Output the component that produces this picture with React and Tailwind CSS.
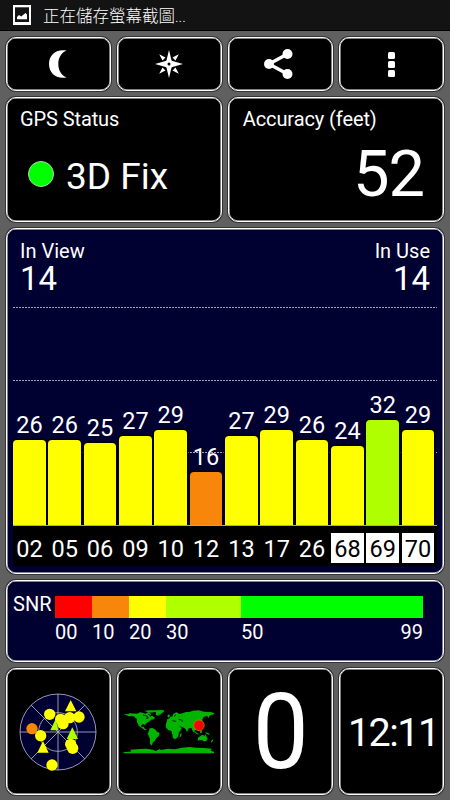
import React from "react";

const satellites = [
  { prn: "02", snr: 26 },
  { prn: "05", snr: 26 },
  { prn: "06", snr: 25 },
  { prn: "09", snr: 27 },
  { prn: "10", snr: 29 },
  { prn: "12", snr: 16 },
  { prn: "13", snr: 27 },
  { prn: "17", snr: 29 },
  { prn: "26", snr: 26 },
  { prn: "68", snr: 24, glonass: true },
  { prn: "69", snr: 32, glonass: true },
  { prn: "70", snr: 29, glonass: true },
];

// pixels of bar per dB of signal
const BAR_SCALE = 3.285;

const snrColor = (snr) => {
  if (snr < 10) return "bg-[#ff0000]";
  if (snr < 20) return "bg-[#f8860b]";
  if (snr < 30) return "bg-[#ffff00]";
  if (snr < 50) return "bg-[#b0ff00]";
  return "bg-[#00ff00]";
};

const Card = ({ className = "", children }) => (
  <div
    className={`rounded-[10px] border border-white shadow-[0_0_0_1px_#333,inset_0_0_0_0.5px_#fff] ${className}`}
  >
    {children}
  </div>
);

const IconButton = ({ label, children }) => (
  <button type="button" aria-label={label} className="h-[54px]">
    <Card className="flex h-full items-center justify-center bg-black">
      {children}
    </Card>
  </button>
);

const StatusBar = () => (
  <header className="flex h-[31px] items-center border-b border-black bg-[#131313] pl-[13px]">
    <svg width="18" height="20" viewBox="0 0 18 20">
      <path fill="#fff" d="M0 0h18v20H0z" />
      <path fill="#131313" d="M2 2.300h14v14.700H2z" />
      <path fill="#fff" d="M4 14.300v-2.300l2-2 2.200 1.500L12.500 8 14 9.500v4.800z" />
    </svg>
    <span className="mt-[3px] ml-3 text-[16.5px] leading-[28px] font-light">
      正在儲存螢幕截圖<span className="text-[15px]">...</span>
    </span>
  </header>
);

const Toolbar = () => (
  <div className="grid grid-cols-4 gap-[5.5px]">
    <IconButton label="Night mode">
      <svg className="mr-[2px]" width="18" height="28" viewBox="0 0 18 28">
        <path
          fill="#fff"
          d="M17.500 0.500C7 -1.500 0 5 0 14s7 15.500 17.500 13.500C12 25 9.300 20 9.300 14S12 3 17.500 0.500z"
        />
      </svg>
    </IconButton>
    <IconButton label="Compass">
      <svg className="mr-px" width="28" height="28" viewBox="-14 -14 28 28">
        <path
          fill="#fff"
          d="M0-14 2.600-3.200 14 0 2.600 3.200 0 14-2.600 3.200-14 0-2.600-3.200z"
        />
        <path
          fill="#fff"
          d="M-9.800-9.800-3.500-6.500-6.500-3.500zM9.800-9.800 6.500-3.500 3.500-6.500zM9.800 9.800 3.500 6.500 6.500 3.500zM-9.800 9.800-6.500 3.500-3.500 6.500z"
        />
        <circle r="4.300" fill="#fff" />
        <circle r="1.500" fill="#000" />
      </svg>
    </IconButton>
    <IconButton label="Share">
      <svg className="mr-[4px]" width="30" height="30" viewBox="0 0 30 30">
        <path
          d="M24.500 5 6 15l18.500 10"
          fill="none"
          stroke="#fff"
          strokeWidth="3.400"
        />
        <g fill="#fff">
          <circle cx="6" cy="15" r="5" />
          <circle cx="24.500" cy="5" r="5" />
          <circle cx="24.500" cy="25" r="5" />
        </g>
      </svg>
    </IconButton>
    <IconButton label="Menu">
      <div className="mt-px flex flex-col gap-[2.5px]">
        <span className="h-[6.5px] w-[7px] rounded-[1.5px] bg-white" />
        <span className="h-[6.5px] w-[7px] rounded-[1.5px] bg-white" />
        <span className="h-[6.5px] w-[7px] rounded-[1.5px] bg-white" />
      </div>
    </IconButton>
  </div>
);

const GridLine = ({ className }) => (
  <div
    className={`absolute inset-x-0 h-px bg-[repeating-linear-gradient(90deg,#a4a4bc_0_2px,transparent_2px_3px)] ${className}`}
  />
);

const SignalChart = () => (
  <Card className="h-[346px] bg-[#000031] pr-[6px] pl-[6px]">
    <div className="flex justify-between px-[7px] pt-[10px]">
      <div>
        <div className="text-[20px] leading-6">In View</div>
        <div className="text-[33px] leading-8">14</div>
      </div>
      <div className="text-right">
        <div className="text-[20px] leading-6">In Use</div>
        <div className="text-[33px] leading-8">14</div>
      </div>
    </div>
    <div className="relative h-[230px]">
      <GridLine className="top-[12px]" />
      <GridLine className="top-[85px]" />
      <GridLine className="top-[157px]" />
      <div className="relative grid h-full grid-cols-12 items-end">
        {satellites.map((sat) => (
          <div key={sat.prn} className="mr-[2.5px] text-center">
            <div className="mb-[3px] text-[23.5px] leading-6">{sat.snr}</div>
            <div
              className={`rounded-t-[4px] shadow-[0_0_0_1.5px_#000008] ${snrColor(sat.snr)}`}
              style={{ height: sat.snr * BAR_SCALE }}
            />
          </div>
        ))}
      </div>
    </div>
    <div className="relative grid h-[41px] grid-cols-12 border-t border-[#a8a890] bg-black pt-[7px]">
      {satellites.map((sat) => (
        <div
          key={sat.prn}
          className={`mr-[2.5px] h-[30px] text-center text-[23.5px] leading-[32px] ${
            sat.glonass ? "bg-white text-black" : "text-white"
          }`}
        >
          {sat.prn}
        </div>
      ))}
    </div>
  </Card>
);

const SnrLegend = () => (
  <Card className="flex h-[82px] bg-[#000031] pt-[15px] pl-[6px] text-[20px] leading-5">
    <div className="-mt-[2px] w-[42px]">SNR</div>
    <div className="w-[368px]">
      <div className="grid h-[22px] grid-cols-[37fr_37fr_37fr_75fr_182fr]">
        <div className="bg-[#ff0000]" />
        <div className="bg-[#f8860b]" />
        <div className="bg-[#ffff00]" />
        <div className="bg-[#b0ff00]" />
        <div className="bg-[#00ff00]" />
      </div>
      <div className="mt-[4px] grid grid-cols-[37fr_37fr_37fr_75fr_182fr]">
        <span>00</span>
        <span>10</span>
        <span>20</span>
        <span>30</span>
        <span className="flex justify-between">
          <span>50</span>
          <span>99</span>
        </span>
      </div>
    </div>
  </Card>
);

const SkyView = () => (
  <svg className="mr-px" width="78" height="78" viewBox="58 96 234 234">
    <circle cx="175" cy="213" r="115" fill="#000031" />
    <g fill="none" stroke="#b4b4cc" strokeWidth="2.500">
      <circle cx="175" cy="213" r="114" />
      <circle cx="175" cy="213" r="58" />
      <path d="M175 99v228M61 213h228M94 132l162 162M94 294l162-162" />
    </g>
    <g fill="#ffff00">
      <circle cx="150" cy="160" r="17" />
      <circle cx="123" cy="224" r="17" />
      <circle cx="157" cy="312" r="17" />
      <circle cx="183" cy="175" r="17" />
      <circle cx="190" cy="188" r="17" />
      <circle cx="210" cy="170" r="17" />
      <circle cx="238" cy="168" r="17" />
      <circle cx="213" cy="250" r="17" />
      <circle cx="219" cy="262" r="17" />
      <path d="M213 117l17 34h-34zM130 240l17 35h-34z" />
    </g>
    <path fill="#b0ff00" d="M168 174l8 34h-24zM218 199l17 35h-34z" />
    <circle cx="97" cy="203" r="17" fill="#f8860b" />
  </svg>
);

const WorldMap = () => (
  <svg className="mr-px" width="92" height="46" viewBox="370 148 276 138">
    <g fill="#00b400">
      <path d="M372 163l14 1 2-3 24 1 10-4 16 4 8-5 8 6-4 8 8-3 8 6-4 5-8 1-4 4-5 4-7 4-1 5-6-4-7 4 2 6 7-2 1 5 8 5-6 0-10-6-8-6-6-12-1-10-10-7-14 0z" />
      <path d="M434 154l14-2 16 0 8 3-10 3-12 1z" />
      <path d="M464 152l28-1 1 4-8 7-10 6-7-3 1-6z" />
      <path d="M450 206l8-1 10 5 4 6 8 4-3 9-7 7-5 8-5 4-4 10-5-6 0-13-3-9-4-8 4-9z" />
      <path d="M500 190l10-3 10 1 8 3 7 2 5 9 6 3-3 7-6 7 0 7-5 9-7 4-5-4-2-11-3-10-9-3-7-7-1-7z" />
      <path d="M542 222l4-2-2 11-4 1z" />
      <path d="M501 186l2-8 7-2 2-5 7-1 2-8 10-4 8 5 12-3 8-3 10 0 10-4 18-1 16 4 20 1 12 4-5 4-8 1-6 9-4-7-10 4-4 8 0 7-7 5-5 10-7 8-5 4 0 6-5-6-4-9-8 1-5 11-5-10-9-5-9-2 5 5-7 7-8-9-2-7-7-1-1-5-6 1-3 4-6-5-5 4z" />
      <path d="M503 169l5-6 3 7-5 4z" />
      <path d="M584 213l9 8 7 3-8 0-7-6zM600 214l6-3 1 8-5 1zM615 217l12 4 4 5-10-3z" />
      <path d="M595 234l8-6 6-3 5 4 3-5 7 13-5 8-7 0-5-4-8 1-5 1z" />
      <path d="M634 244l7-5-1 5-6 5zM618 243l3 0-2 3z" />
      <path d="M372 277l22-1-2-6 28-2 20-1 20 3 8 4 12-6 4 3 20-4 22 2 20-5 24-2 20 2 24 1 22 2-3 6 10 3v5H372z" />
    </g>
    <g stroke="#000" strokeWidth="2.500" fill="none">
      <path d="M430 166l12 3 4 6-7 1M445 163l8 5M518 183l11 2M537 179l9 2 3 5M525 170l3-6" />
    </g>
    <circle cx="598" cy="197" r="16" fill="#ff0000" stroke="#d8a000" strokeWidth="1.500" />
  </svg>
);

export default function App() {
  return (
    <div className="flex h-[800px] w-[450px] flex-col overflow-hidden bg-[#606060] font-[Roboto,'Noto_Sans_CJK_TC',sans-serif] text-white">
      <StatusBar />
      <main className="flex flex-col gap-[6px] px-[6px] pt-[6px]">
        <Toolbar />
        <div className="grid h-[125px] grid-cols-2 gap-[5.5px]">
          <Card className="bg-black pt-[9px] pl-[13px]">
            <div className="text-[20px] leading-6 tracking-[-0.1px]">
              GPS Status
            </div>
            <div className="mt-[25px] flex items-start pl-2">
              <span className="mt-[5px] h-[26px] w-[26px] rounded-full border border-[#a0e0a0] bg-[#00ff00]" />
              <span className="ml-[12px] text-[37px] leading-[42px]">
                3D Fix
              </span>
            </div>
          </Card>
          <Card className="bg-black pt-[9px] pr-[19px] pl-[14px]">
            <div className="text-[20px] leading-6 tracking-[-0.1px]">
              Accuracy (feet)
            </div>
            <div className="mt-[15px] text-right text-[65px] leading-[56px] tracking-[-1px]">
              52
            </div>
          </Card>
        </div>
        <SignalChart />
        <SnrLegend />
        <div className="grid h-[127px] grid-cols-4 gap-[5.5px]">
          <Card className="flex items-center justify-center bg-black">
            <SkyView />
          </Card>
          <Card className="flex items-center justify-center bg-black pt-px">
            <WorldMap />
          </Card>
          <Card className="flex items-center justify-center bg-black text-[106px] leading-none">
            <span className="inline-block scale-x-[0.94]">0</span>
          </Card>
          <Card className="flex items-center justify-center bg-black pt-[3px] pl-[4px] text-[39.5px] leading-none tracking-[-1.5px]">
            12:11
          </Card>
        </div>
      </main>
    </div>
  );
}
